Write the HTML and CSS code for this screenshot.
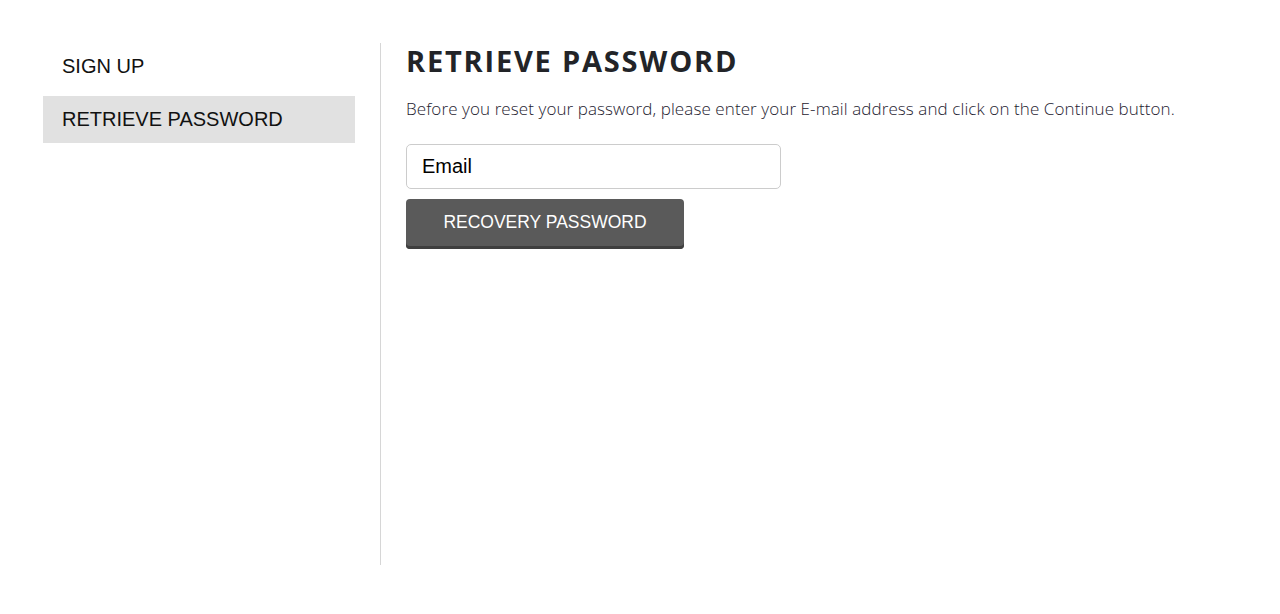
FILE: index.html
```html
<!DOCTYPE html>
<html>
<head>
<meta charset="utf-8">
<link rel="stylesheet" href="styles.css">
</head>
<body>
<div class="page">
  <nav class="sidebar">
    <a class="nav-item">SIGN UP</a>
    <a class="nav-item active">RETRIEVE PASSWORD</a>
  </nav>
  <main class="content">
    <h1 class="title">RETRIEVE PASSWORD</h1>
    <p class="intro">Before you reset your password, please enter your E-mail address and click on the Continue button.</p>
    <div class="field">Email</div>
    <button class="btn">RECOVERY PASSWORD</button>
  </main>
</div>
</body>
</html>
```
FILE: styles.css
```css
html, body { margin: 0; padding: 0; background: #fff; }
.page {
  display: flex;
  padding: 43px 0 0 43px;
}
.sidebar {
  width: 312px;
  display: flex;
  flex-direction: column;
  gap: 6px;
}
.nav-item {
  display: block;
  font-family: "Liberation Sans", Arial, sans-serif;
  font-size: 20px;
  line-height: 23px;
  padding: 12px 19px;
  color: #111;
}
.nav-item.active { background: #e1e1e1; }
.content {
  margin-left: 25px;
  border-left: 1px solid #d6d6d6;
  padding-left: 25px;
  height: 522px;
}
.title {
  margin: 0;
  font-family: "Open Sans", sans-serif;
  font-weight: 700;
  font-size: 29px;
  line-height: 36px;
  letter-spacing: 1.8px;
  color: #222428;
}
.intro {
  margin: 18px 0 0;
  font-family: "Open Sans", sans-serif;
  font-weight: 300;
  font-size: 17px;
  line-height: 24px;
  letter-spacing: 0.09px;
  color: #1e2230;
}
.field {
  margin-top: 23px;
  width: 343px;
  height: 43px;
  border: 1px solid #cccccc;
  border-radius: 5px;
  padding: 0 15px;
  font-family: "Liberation Sans", Arial, sans-serif;
  font-size: 20px;
  line-height: 43px;
  color: #000;
}
.btn {
  display: block;
  margin-top: 10px;
  width: 278px;
  height: 50px;
  border: 0;
  border-radius: 4px;
  background: #5a5a5a;
  box-shadow: inset 0 -3px 0 #3f3f3f;
  color: #fff;
  font-family: "Liberation Sans", Arial, sans-serif;
  font-size: 17.5px;
  padding: 0 0 4px;
}
```
